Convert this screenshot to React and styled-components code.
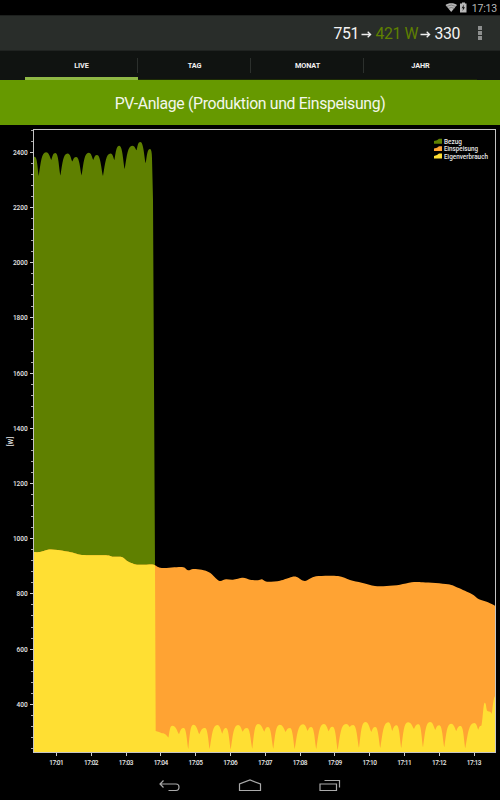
import React from 'react'
import styled, { createGlobalStyle } from 'styled-components'

const GlobalStyle = createGlobalStyle`
  * {
    box-sizing: border-box;
  }

  body {
    margin: 0;
    background: #000;
    font-family: Roboto, "Liberation Sans", sans-serif;
  }
`;

const Screen = styled.div`
  width: 500px;
  height: 800px;
  display: flex;
  flex-direction: column;
  background: #000;
  overflow: hidden;
`;

const StatusBar = styled.div`
  height: 15px;
  display: flex;
  align-items: center;
  justify-content: flex-end;
  gap: 3px;
  padding-right: 3px;
  color: #b8b8b8;
`;

const Clock = styled.span`
  font-size: 10.5px;
  letter-spacing: -0.2px;
  line-height: 15px;
  padding-top: 1px;
`;

const ActionBar = styled.div`
  height: 36px;
  display: flex;
  align-items: center;
  justify-content: flex-end;
  padding-right: 18px;
  background: #292d2a;
  border-top: 1px solid #1d201e;
  border-bottom: 1px solid #202321;
`;

const Power = styled.span`
  font-size: 15.8px;
  letter-spacing: -0.4px;
  line-height: 20px;
  padding-top: 1px;
  white-space: pre;
  color: ${props => props.$own ? "#5f8000" : "#f4f4f4"};
`;

const Arrow = styled.svg`
  margin: 3px 0 0 2px;
`;

const Overflow = styled.div`
  display: flex;
  flex-direction: column;
  gap: 1px;
  margin-left: 18px;
`;

const Dot = styled.span`
  width: 4px;
  height: 4px;
  background: #8d8f8e;
`;

const Tabs = styled.div`
  height: 29px;
  display: flex;
  padding-left: 25px;
  background: #101311;
  border-bottom: 0;
`;

const Tab = styled.div`
  width: 113px;
  position: relative;
  display: flex;
  align-items: center;
  justify-content: center;
  padding-top: 2px;
  font-size: 7.3px;
  letter-spacing: -0.1px;
  font-weight: 700;
  color: #f0f0f0;
  border-bottom: ${props => props.$active ? "3px solid #8fb845" : "1px solid #1d2b05"};
  padding-bottom: ${props => props.$active ? "0" : "2px"};

  &:not(:last-child)::after {
    content: "";
    position: absolute;
    right: 0;
    top: 7px;
    width: 1px;
    height: 15px;
    background: #2c302d;
  }
`;

const Banner = styled.h1`
  height: 45px;
  margin: 0;
  padding-top: 1px;
  display: flex;
  align-items: center;
  justify-content: center;
  background: #669900;
  color: #f3f7ec;
  font-size: 15.8px;
  letter-spacing: -0.34px;
  font-weight: 400;
`;

const Plot = styled.svg`
  display: block;
  flex: none;
`;

const Label = styled.text`
  font-family: Roboto, "Liberation Sans", sans-serif;
  font-size: 6.5px;
  font-weight: 500;
  fill: #e8e8e8;
`;

const NavBar = styled.div`
  flex: 1;
  display: flex;
  justify-content: center;
  align-items: center;
  gap: 57px;
  padding-top: 2px;
`;

const production = [
  [33.5, 552], [40, 552], [49, 549.5], [58, 550], [72, 552.5], [82, 555],
  [106, 555.3], [113, 556.8], [121.7, 557], [128, 561.5], [137, 564.7],
  [152, 564.5], [155, 565.3], [161.7, 568], [182, 567], [188, 570.3],
  [193, 569], [201.7, 569.7], [210, 572.7], [219, 580.7], [226, 579.3],
  [233, 579.7], [243, 577.7], [250, 579.7], [258, 580.3], [262, 579.3],
  [267, 581.7], [280, 580.7], [291.7, 577], [296.7, 577], [305, 581],
  [316, 576.3], [338, 576], [350, 580], [361.7, 582.7], [375, 586],
  [386.7, 586], [400, 584.7], [411.7, 582.3], [423, 582.3], [448, 584.3],
  [458, 587.7], [471.7, 594], [479, 599.3], [488, 602.3], [495.5, 606],
];

// peaks and valleys alternate, starting with a peak
const grid = [
  [35, 157], [38.7, 176], [46, 152.3], [51.3, 160], [55.5, 153], [60.4, 175.6],
  [67.6, 153.4], [72.3, 161.6], [76.3, 157], [81.6, 175.6], [88.7, 152.8],
  [93.3, 160], [97, 155], [103, 176], [110.6, 153.4], [114.4, 160],
  [119.3, 145.7], [124.7, 169], [132.3, 145.7], [136.6, 150.3], [140.3, 142],
  [145.7, 163.2], [150, 149],
];

const own = [
  [162, 733.3], [168.5, 737.5], [172.3, 725.7], [179, 734.3], [183.7, 728],
  [188.3, 749], [193.3, 724.7], [199.3, 734.3], [205, 728], [209.7, 749],
  [217.3, 725], [222.3, 733.7], [226, 728], [230.7, 749.5], [238, 725],
  [242.7, 731.7], [247, 728], [252.3, 748.7], [258, 724], [264.3, 731.7],
  [268, 727], [273.3, 748.7], [279.7, 724.7], [285.7, 732], [290, 728],
  [294.7, 749], [303, 724.3], [307.7, 731], [311.3, 727], [316.3, 749],
  [323.8, 724], [328.7, 731.3], [332.7, 726.7], [337.7, 750], [346, 724],
  [349.7, 727], [353.3, 725], [359, 747.7], [365.3, 722], [371.3, 732],
  [375.3, 727], [380.3, 748], [388.3, 722.3], [392.3, 731], [396.7, 725.3],
  [401.3, 748], [408, 722.3], [414, 729], [418.7, 724.3], [423, 747.3],
  [430, 722], [435.3, 730], [439.3, 725.3], [444.3, 747.3], [451, 723.7],
  [456.3, 731], [460.7, 726], [465.3, 748.3], [474.3, 723], [478.3, 729.7],
  [481.3, 725.7],
];

// Catmull-Rom spline through the points
const smooth = points => points.slice(1).map(([x, y], i) => {
  const p0 = points[i - 1] || points[i];
  const p1 = points[i];
  const p3 = points[i + 2] || [x, y];
  return `C${p1[0] + (x - p0[0]) / 7} ${p1[1] + (y - p0[1]) / 7} ${x - (p3[0] - p1[0]) / 7} ${y - (p3[1] - p1[1]) / 7} ${x} ${y}`;
}).join(" ");

// rounded on top, pointed at the bottom
const humps = points => points.slice(1).map(([x, y], i) => {
  const [px, py] = points[i];
  const dx = x - px;
  const dy = y - py;
  return i % 2 === 0
    ? `C${px + dx * 0.6} ${py} ${x - dx * 0.3} ${y - dy * 0.35} ${x} ${y}`
    : `C${px + dx * 0.3} ${py + dy * 0.6} ${x - dx * 0.6} ${y} ${x} ${y}`;
}).join(" ");

const productionArea = `M33.5 752 V552 ${smooth(production)} V752 Z`;
const gridArea = `M33.5 752 V156.5 L35 157 ${humps(grid)} Q151.8 149 152 158 L153 200 L155 566 V752 Z`;
const ownArea = `M33.5 752 V552 ${smooth(production.slice(0, 13))} L155.7 731 L159 732 L162 733.3 ${humps(own)}
  C482.5 725 483.2 702.7 484.7 702.7 C486.5 702.7 486 710 487.5 711 C489 712 491 711 491.7 714
  C492.5 713 493 696 495.5 696 V752 Z`;

const watts = [2400, 2200, 2000, 1800, 1600, 1400, 1200, 1000, 800, 600, 400];
const minorTicks = Array.from({ length: 57 }, (_, i) => 130.2 + i * 11.04);
const times = Array.from({ length: 13 }, (_, i) => `17:${String(i + 1).padStart(2, "0")}`);

const legend = [
  { name: "Bezug", color: "#5f8000", width: 18 },
  { name: "Einspeisung", color: "#ffa333", width: 34 },
  { name: "Eigenverbrauch", color: "#ffdf33", width: 44 },
];

const RightArrow = () => (
  <Arrow width="11" height="9" viewBox="0 0 11 9" fill="none" stroke="#eee" strokeWidth="1.3">
    <path d="M0.5 4.5H9.5M6.7 1.7L9.6 4.5L6.7 7.3" />
  </Arrow>
)

const Chart = () => (
  <Plot width="500" height="645" viewBox="0 125 500 645">
    <path d={gridArea} fill="#5f8000" />
    <path d={productionArea} fill="#ffa333" />
    <path d={ownArea} fill="#ffdf33" />

    <rect x="33.5" y="129.5" width="462" height="623" fill="none" stroke="#c4c4c4" />

    {minorTicks.map(y => (
      <path key={y} d={`M31 ${Math.floor(y) + 0.5}H33`} stroke="#aaa" />
    ))}
    {watts.map((w, i) => {
      const y = 152.3 + i * 55.2;
      return (
        <g key={w}>
          <path d={`M30 ${Math.floor(y) + 0.5}H33`} stroke="#ccc" />
          <Label x="27.7" y={y + 2.5} textAnchor="end">{w}</Label>
        </g>
      )
    })}
    {times.map((t, i) => {
      const x = 56.5 + i * 34.8;
      return (
        <g key={t}>
          <path d={`M${Math.floor(x) + 0.5} 753V756`} stroke="#ccc" />
          <Label x={x} y="764.5" textAnchor="middle" textLength="14.5">{t}</Label>
        </g>
      )
    })}
    <Label transform="translate(12.6 441.5) rotate(-90)" textAnchor="middle">[W]</Label>

    {legend.map((l, i) => (
      <g key={l.name} transform={`translate(434 ${138.5 + i * 7.4})`}>
        <path d="M0 5.2V2.6L3 1.8L5 0.3H8V5.2Z" fill={l.color} />
        <Label x="10" y="5.2" textLength={l.width} lengthAdjust="spacingAndGlyphs">{l.name}</Label>
      </g>
    ))}
  </Plot>
)

const App = () => {
  return (
    <>
      <GlobalStyle />
      <Screen>
        <StatusBar>
          <svg width="24" height="15" viewBox="0 0 24 15">
            <path d="M0.5 5C3 2.5 9.500 2.5 12 5L6.200 12Z" fill="#b8b8b8" />
            <path d="M1.500 6.500Q6.200 3.500 11 6.500M3 8.500Q6.200 6.500 9.500 8.500" fill="none" stroke="#555" strokeWidth="0.6" />
            <path d="M15 3.500H17V2.500H20V3.500H21.500V12.500H15Z" fill="#b8b8b8" />
            <path d="M19 4.500L16.600 8.200H18.100L17.500 11L20 7.300H18.500Z" fill="#111" />
          </svg>
          <Clock>17:13</Clock>
        </StatusBar>

        <ActionBar>
          <Power>751</Power>
          <RightArrow />
          <Power $own> 421 W</Power>
          <RightArrow />
          <Power> 330</Power>
          <Overflow>
            <Dot />
            <Dot />
            <Dot />
          </Overflow>
        </ActionBar>

        <Tabs>
          <Tab $active>LIVE</Tab>
          <Tab>TAG</Tab>
          <Tab>MONAT</Tab>
          <Tab>JAHR</Tab>
        </Tabs>

        <Banner>PV-Anlage (Produktion und Einspeisung)</Banner>

        <Chart />

        <NavBar>
          <svg width="22" height="14" viewBox="0 0 22 14" fill="none" stroke="#aaa" strokeWidth="1.2">
            <path d="M4.5 1.5L1 5L4.5 8.5M1 5H17Q20 5 20 8Q20 11.5 17 11.5H9.500" />
          </svg>
          <svg width="24" height="14" viewBox="0 0 24 14" fill="none" stroke="#aaa" strokeWidth="1.2">
            <path d="M1.5 11.5V5L12 1L22.5 5V11.5Z" />
          </svg>
          <svg width="22" height="14" viewBox="0 0 22 14" fill="none" stroke="#aaa" strokeWidth="1.2">
            <path d="M1 5H17.5V11.5H1ZM5.500 1.5H20.5V8.5" />
          </svg>
        </NavBar>
      </Screen>
    </>
  )
}

export default App
